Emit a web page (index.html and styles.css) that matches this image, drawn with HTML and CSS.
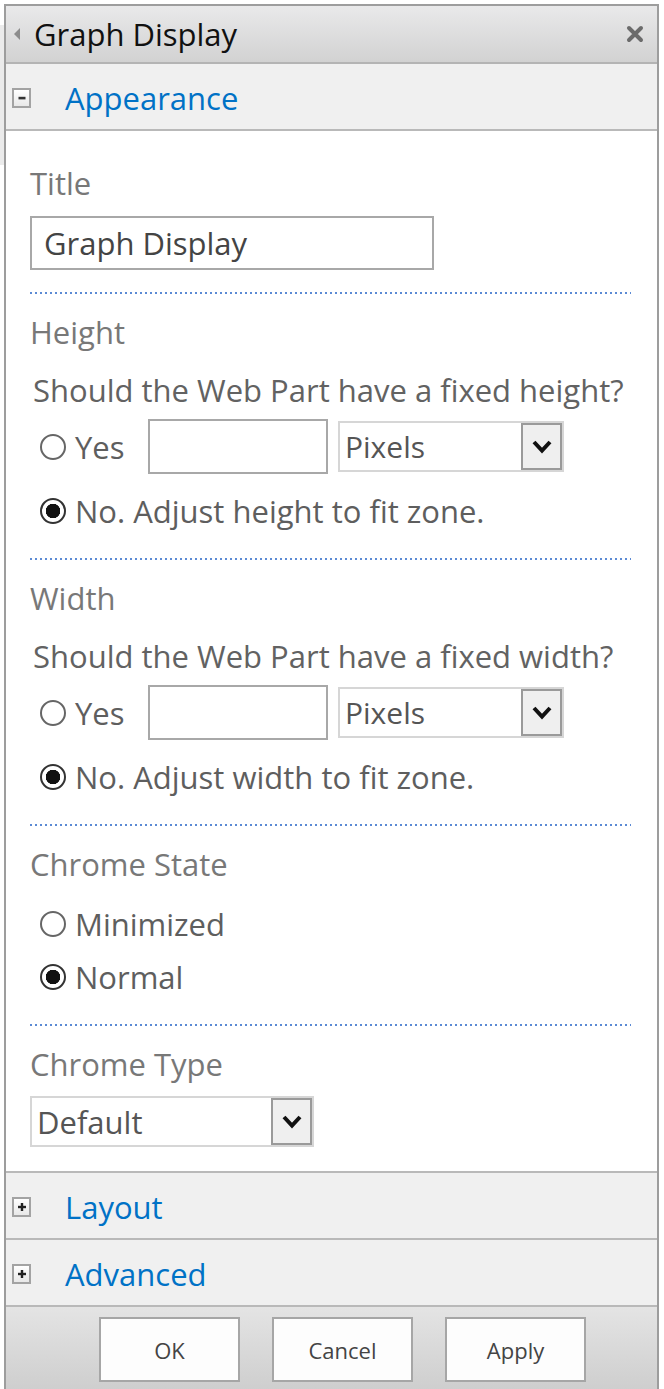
FILE: index.html
```html
<!DOCTYPE html>
<html lang="en">
<head>
  <meta charset="UTF-8">
  <meta name="viewport" content="width=device-width, initial-scale=1.0">
  <title>Graph Display - Tool Pane</title>
  <link rel="stylesheet" href="styles.css">
</head>
<body>
  <div class="toolpane">
    <div class="pane-header">
      <span class="pane-arrow"></span>
      <h1>Graph Display</h1>
      <svg class="pane-close" width="18" height="18" viewBox="0 0 18 18">
        <path d="M3 3 L15 15 M15 3 L3 15" stroke="#6b6b6b" stroke-width="4" stroke-linecap="round"/>
      </svg>
    </div>

    <div class="section-head">
      <span class="toggle">
        <svg width="10" height="10" viewBox="0 0 10 10"><rect x="1.5" y="3.8" width="7" height="2.6" fill="#333"/></svg>
      </span>
      <span class="section-title">Appearance</span>
    </div>

    <div class="section-body">
      <div class="group">
        <div class="group-label">Title</div>
        <input type="text" class="text-input title-input" value="Graph Display">
      </div>
      <div class="divider"></div>

      <div class="group">
        <div class="group-label">Height</div>
        <div class="question">Should the Web Part have a fixed height?</div>
        <div class="option-row">
          <label class="radio-item">
            <input type="radio" name="height" class="radio">
            <span>Yes</span>
          </label>
          <input type="text" class="text-input size-input">
          <div class="dropdown unit-select">
            <select>
              <option>Pixels</option>
              <option>Centimeters</option>
              <option>Inches</option>
            </select>
            <span class="drop-btn">
              <svg width="22" height="16" viewBox="0 0 22 16"><path d="M3 3 L11 11.5 L19 3" fill="none" stroke="#111" stroke-width="4"/></svg>
            </span>
          </div>
        </div>
        <label class="radio-item">
          <input type="radio" name="height" class="radio" checked>
          <span>No. Adjust height to fit zone.</span>
        </label>
      </div>
      <div class="divider"></div>

      <div class="group">
        <div class="group-label">Width</div>
        <div class="question">Should the Web Part have a fixed width?</div>
        <div class="option-row">
          <label class="radio-item">
            <input type="radio" name="width" class="radio">
            <span>Yes</span>
          </label>
          <input type="text" class="text-input size-input">
          <div class="dropdown unit-select">
            <select>
              <option>Pixels</option>
              <option>Centimeters</option>
              <option>Inches</option>
            </select>
            <span class="drop-btn">
              <svg width="22" height="16" viewBox="0 0 22 16"><path d="M3 3 L11 11.5 L19 3" fill="none" stroke="#111" stroke-width="4"/></svg>
            </span>
          </div>
        </div>
        <label class="radio-item">
          <input type="radio" name="width" class="radio" checked>
          <span>No. Adjust width to fit zone.</span>
        </label>
      </div>
      <div class="divider"></div>

      <div class="group">
        <div class="group-label">Chrome State</div>
        <div class="radio-list">
          <label class="radio-item">
            <input type="radio" name="state" class="radio">
            <span>Minimized</span>
          </label>
          <label class="radio-item">
            <input type="radio" name="state" class="radio" checked>
            <span>Normal</span>
          </label>
        </div>
      </div>
      <div class="divider"></div>

      <div class="group">
        <div class="group-label">Chrome Type</div>
        <div class="dropdown type-select">
          <select>
            <option>Default</option>
            <option>None</option>
            <option>Title and Border</option>
            <option>Title Only</option>
            <option>Border Only</option>
          </select>
          <span class="drop-btn">
            <svg width="22" height="16" viewBox="0 0 22 16"><path d="M3 3 L11 11.5 L19 3" fill="none" stroke="#111" stroke-width="4"/></svg>
          </span>
        </div>
      </div>
    </div>

    <div class="section-head">
      <span class="toggle">
        <svg width="10" height="10" viewBox="0 0 10 10"><rect x="1" y="3.8" width="8" height="2.4" fill="#222"/><rect x="3.8" y="1" width="2.4" height="8" fill="#222"/></svg>
      </span>
      <span class="section-title">Layout</span>
    </div>

    <div class="section-head">
      <span class="toggle">
        <svg width="10" height="10" viewBox="0 0 10 10"><rect x="1" y="3.8" width="8" height="2.4" fill="#222"/><rect x="3.8" y="1" width="2.4" height="8" fill="#222"/></svg>
      </span>
      <span class="section-title">Advanced</span>
    </div>

    <div class="pane-footer">
      <button type="button">OK</button>
      <button type="button">Cancel</button>
      <button type="button">Apply</button>
    </div>
  </div>
</body>
</html>
```

FILE: styles.css
```css
body {
  margin: 0;
  background: white linear-gradient(#ebebeb, #ebebeb) no-repeat 0 25px / 4px 140px;
  font-family: "Open Sans", "Noto Sans", sans-serif;
  font-size: 31px;
}
.toolpane {
  box-sizing: border-box;
  width: 655px;
  min-height: 1390px;
  margin: 4px 0 0 4px;
  border: 2px solid #9d9d9d;
  border-bottom: none;
  display: flex;
  flex-direction: column;
}
.pane-header {
  height: 56px;
  display: flex;
  align-items: center;
  background: linear-gradient(#e9e9ea, #d2d2d2);
  border-bottom: 2px solid #b4b4b4;
  padding: 0 13px 0 8px;
}
.pane-arrow {
  width: 0;
  height: 0;
  border-top: 6px solid transparent;
  border-bottom: 6px solid transparent;
  border-right: 6px solid #8c8c8c;
  margin-right: 14px;
}
h1 {
  flex: 1;
  margin: 0;
  font-size: 31px;
  font-weight: normal;
  line-height: 40px;
  color: #111;
}
.section-head {
  box-sizing: border-box;
  height: 67px;
  display: flex;
  align-items: center;
  background-color: #f0f0f0;
  border-bottom: 2px solid #b9b9b9;
  padding: 2px 0 0 6px;
}
.toggle {
  box-sizing: border-box;
  width: 19px;
  height: 20px;
  border: 2px solid #a3a3a3;
  background: linear-gradient(#ffffff, #e8e8e8);
  display: flex;
  align-items: center;
  justify-content: center;
  margin-right: 34px;
}
.section-title {
  font-size: 31px;
  line-height: 40px;
  color: #0072c6;
}
.section-body {
  background-color: white;
  padding: 32px 26px 24px 24px;
  border-bottom: 2px solid #b9b9b9;
}
.group-label {
  color: #787878;
  line-height: 40px;
}
.text-input {
  box-sizing: border-box;
  border: 2px solid #a8a8a8;
  font-family: inherit;
  font-size: 31px;
  color: #444;
  background-color: white;
  padding: 0 12px;
  outline: none;
}
.title-input {
  width: 404px;
  height: 54px;
  margin-top: 13px;
  display: block;
}
.divider {
  height: 2px;
  margin: 22px 0 18px;
  background: repeating-linear-gradient(to right, #5b8ad4 0 2px, transparent 2px 5px);
}
.question {
  color: #626262;
  line-height: 40px;
  margin: 18px 0 0 3px;
}
.option-row {
  display: flex;
  align-items: center;
  height: 55px;
  margin-top: 9px;
}
.radio-item {
  display: flex;
  align-items: center;
  height: 50px;
  color: #5e5e5e;
  margin-left: 10px;
}
.option-row .radio-item {
  width: 108px;
}
.option-row + .radio-item {
  margin-top: 12px;
}
.radio-list {
  margin-top: 15px;
}
.radio-list .radio-item + .radio-item {
  margin-top: 3px;
}
.radio {
  appearance: none;
  -webkit-appearance: none;
  box-sizing: border-box;
  width: 26px;
  height: 26px;
  margin: 0 9px 0 0;
  border: 2px solid #666;
  border-radius: 50%;
  background-color: white;
  flex-shrink: 0;
}
.radio:checked {
  border-color: #333;
  background: radial-gradient(circle, #111 0 7px, white 7.5px);
}
.size-input {
  width: 180px;
  height: 55px;
}
.dropdown {
  box-sizing: border-box;
  display: flex;
  align-items: center;
  border: 2px solid #d6d6d6;
  background-color: white;
}
.dropdown select {
  appearance: none;
  -webkit-appearance: none;
  flex: 1;
  min-width: 0;
  border: none;
  background: transparent;
  font-family: inherit;
  font-size: 30px;
  color: #555;
  padding: 0 5px;
  outline: none;
}
.drop-btn {
  box-sizing: border-box;
  width: 41px;
  height: 47px;
  display: flex;
  align-items: center;
  justify-content: center;
  border: 2px solid #9a9a9a;
  background-color: #efefef;
}
.unit-select {
  width: 226px;
  height: 51px;
  margin-left: 10px;
}
.type-select {
  width: 284px;
  height: 51px;
  margin-top: 12px;
}
.type-select select {
  font-size: 31px;
}
.pane-footer {
  flex: 1;
  display: flex;
  align-items: flex-start;
  gap: 32px;
  padding: 10px 0 0 93px;
  background: linear-gradient(#e4e4e4, #cdcdcd);
}
button {
  width: 141px;
  height: 65px;
  border: 2px solid #a6a6a6;
  background-color: #fdfdfd;
  font-family: inherit;
  font-size: 22px;
  color: #444;
  cursor: pointer;
}
```
